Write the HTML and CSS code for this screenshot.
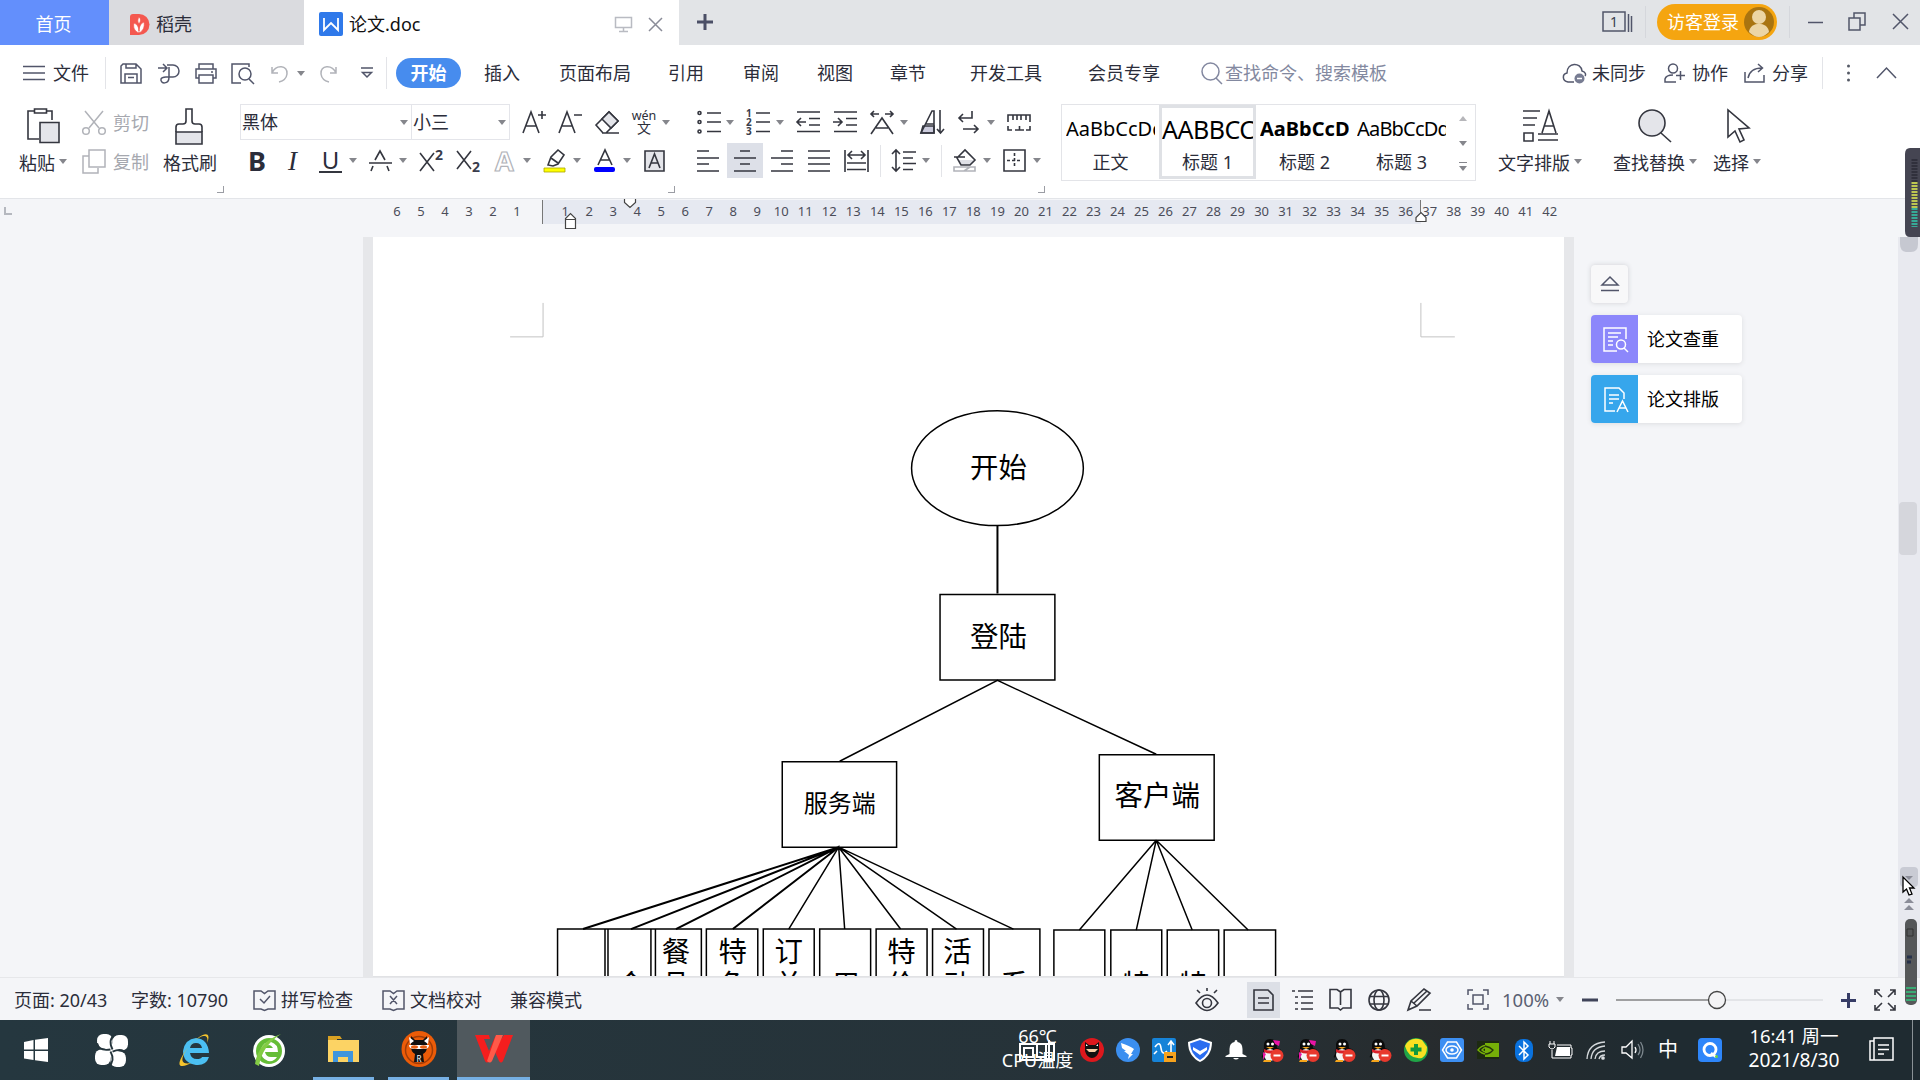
FILE: index.html
```html
<!DOCTYPE html>
<html lang="zh-CN">
<head>
<meta charset="utf-8">
<title>论文.doc</title>
<link rel="stylesheet" href="styles.css">
</head>
<body>
<header class="tabs">
  <div class="tab home">首页</div>
  <div class="tab docer">
    <svg width="19" height="21"><path d="M3 0h6a10.500 10.500 0 0 1 0 21H0V3a3 3 0 0 1 3-3z" fill="#f4584f"/><path d="M9 20V9M9 19C4 17 3 13 4 9c3 1 5 4 5 8 0-4 2-8 5-9 1 5-1 9-5 11M9 10c-2-3-1-5 0-7 2 2 2 4 0 7" fill="#fff" stroke="#f4584f" stroke-width=".7"/></svg>
    <span>稻壳</span>
  </div>
  <div class="tab current">
    <svg width="24" height="24"><rect width="24" height="24" rx="2" fill="#2f79ea"/><path d="M5 6v12l7-7 7 7V6" fill="none" stroke="#fff" stroke-width="1.800"/></svg>
    <span class="name">论文.doc</span>
    <svg width="17" height="17" class="ln pale"><path d="M.5 1.500h16v10H.5zM8.500 11.500v4M4 15.500h9"/></svg>
    <svg width="15" height="15" class="ln mid"><path d="M1 1l13 13M14 1L1 14"/></svg>
  </div>
  <svg class="plus" width="18" height="18"><path d="M9 1v16M1 9h16" stroke="#4b4f66" stroke-width="3"/></svg>
  <div class="window">
    <svg width="32" height="22" class="ln"><path d="M1 1h22v19H1zM26.500 3v18M29.500 5v16"/><text x="8" y="16" class="t14">1</text></svg>
    <i class="vr"></i>
    <div class="login"><span>访客登录</span><svg width="30" height="30"><circle cx="15" cy="15" r="15" fill="#a97410"/><circle cx="15" cy="10" r="7" fill="#ecd5a4"/><path d="M5 25c1-11 19-11 20 0q-10 10-20 0z" fill="#ecd5a4"/></svg></div>
    <i class="vr"></i>
    <svg width="15" height="18" class="ln minimize"><path d="M0 9.500h15"/></svg>
    <svg width="18" height="19" class="ln restore"><path d="M1 6h11v12H1zM6 6V1h11v12h-5"/></svg>
    <svg width="17" height="17" class="ln"><path d="M1 1l15 15M16 1L1 16"/></svg>
  </div>
</header>

<nav class="menu">
  <svg width="22" height="16" class="ln"><path d="M0 1.500h22M0 8h22M0 14.500h22"/></svg>
  <span>文件</span>
  <i class="vr"></i>
  <svg width="22" height="21" class="ln"><path d="M3 1h13l5 5v14H1V3zM6 1v4h10V1M5 20v-9h12v9M8 14.500h6"/></svg>
  <svg width="22" height="21" class="ln"><path d="M0 5h8M5 1l4 4-4 4M9 2h6a5.500 5.500 0 0 1 0 12h-4V4M11 14c0 8-9 7-8 2 1-3 5-2 8-2"/></svg>
  <svg width="22" height="21" class="ln"><path d="M4 6V1h14v5M4 15H1V6h20v9h-3M4 12h14v8H4zM16 9h2"/></svg>
  <svg width="24" height="21" class="ln"><path d="M10 20H1V1h17v3M18 16l5 5"/><circle cx="14" cy="11" r="6"/></svg>
  <svg width="18" height="19" class="ln faint"><path d="M1 3v6h6M1 9c4-9 16-8 15 1-.500 4-4 7-8 8"/></svg>
  <i class="caret"></i>
  <svg width="17" height="19" class="ln faint"><path d="M16 3v6h-6M16 9C12 0 0 1 1 10c.500 4 4 7 8 8"/></svg>
  <svg width="12" height="12" class="ln"><path d="M0 1h12M1.500 5.500L6 10l4.500-4.500z"/></svg>
  <i class="vr"></i>
  <b class="pill">开始</b>
  <span>插入</span><span>页面布局</span><span>引用</span><span>审阅</span><span>视图</span><span>章节</span><span>开发工具</span><span>会员专享</span>
  <svg width="22" height="22" class="ln search"><circle cx="9.500" cy="9.500" r="8.500"/><path d="M15 16l6 6"/></svg>
  <span class="hint">查找命令、搜索模板</span>
  <svg width="25" height="21" class="ln"><path d="M12 19H6C0 18 0 11 5 10 5-1 19-1 20 8c4 1 4 4 3 5"/><circle cx="17.500" cy="15.500" r="5" fill="#777c92" stroke="none"/><path d="M15 15.500h5" stroke="#fff"/></svg>
  <span>未同步</span>
  <svg width="21" height="20" class="ln"><circle cx="9" cy="5.500" r="4.500"/><path d="M12 19H1v-3q1-4 8-4M16.500 8v9M12 12.500h9"/></svg>
  <span>协作</span>
  <svg width="22" height="20" class="ln"><path d="M1 9v10h19v-7M4 15Q6 5 18 5M14 1l4.500 4L14 9"/></svg>
  <span>分享</span>
  <i class="vr"></i>
  <svg width="5" height="18" fill="#555a66"><circle cx="2.500" cy="2" r="1.500"/><circle cx="2.500" cy="9" r="1.500"/><circle cx="2.500" cy="16" r="1.500"/></svg>
  <svg width="21" height="12" class="ln"><path d="M1 11L10.500 1 20 11"/></svg>
</nav>

<section class="ribbon">
  <div class="clip">
    <div class="big paste"><svg width="33" height="36" class="ln dk"><path d="M12 31H1V3h24v9"/><path d="M7.500 1h12v4h-12z" fill="#fff"/><path d="M13 14.500h19v20H13z" fill="#e4e5ea"/></svg><span>粘贴<i class="caret"></i></span></div>
    <div class="pair">
      <div><svg width="24" height="24" class="ln faint"><path d="M3 0l14 17M21 0L7 17"/><circle cx="4" cy="20" r="3.300"/><circle cx="20" cy="20" r="3.300"/></svg><span>剪切</span></div>
      <div><svg width="24" height="25" class="ln faint"><path d="M7 7H1v17h15v-5M7 1h16v17H7z"/></svg><span>复制</span></div>
    </div>
    <div class="big"><svg width="28" height="37" class="ln dk"><path d="M1 24h26v12H1z" fill="#e4e5ea"/><path d="M1 24v-5q0-3 3-3h4q3 0 3-3V1h6v12q0 3 3 3h4q3 0 3 3v5"/></svg><span>格式刷</span></div>
    <i class="corner"></i>
  </div>

  <div class="font">
    <div class="row fa">
      <div class="combo"><span>黑体</span><i class="caret"></i></div>
      <div class="combo size"><span>小三</span><i class="caret"></i></div>
      <svg width="24" height="24" class="ln dk"><path d="M1 23L9 2l8 21M4 16h10M16 5h8M20 1v8"/></svg>
      <svg width="24" height="24" class="ln dk"><path d="M1 23L9 2l8 21M4 16h10M16 5h8"/></svg>
      <svg width="25" height="23" class="ln dk"><path d="M1 14L14 1l9 9-12 12H8zM7 22h17"/><path d="M7 8l9 9 7-7-9-9z" fill="#e4e5ea"/></svg>
      <span class="wen"><span>wén</span><span class="han">文</span></span>
      <i class="caret"></i>
    </div>
    <div class="row fb">
      <b class="g">B</b><i class="g it">I</i><u class="g un">U</u><i class="caret"></i>
      <svg width="23" height="22" class="ln dk"><path d="M0 13h23M6 10l5-9 5 9M4 16l-2 5M18 16l2 5"/></svg><i class="caret"></i>
      <svg width="25" height="22" class="ln dk"><path d="M1 3l14 18M15 3L1 21"/><text x="16" y="10" class="t14 bd">2</text></svg>
      <svg width="25" height="24" class="ln dk"><path d="M1 2l14 18M15 2L1 20"/><text x="16" y="23" class="t14 bd">2</text></svg>
      <span class="outline">A</span><i class="caret"></i>
      <svg width="24" height="24" class="ln dk"><path d="M5 16l3-8 7-7 6 5-6 9-5 2z"/><path d="M8 9l7 5" /><path d="M1 19h21v4H1z" fill="#ff0" stroke="#aaa500" stroke-width=".8"/></svg><i class="caret"></i>
      <svg width="22" height="24" class="ln dk"><path d="M4 16L11 1l7 15M6.500 11h9"/><rect y="18" width="21" height="5" rx="2" fill="#00f" stroke="none"/></svg><i class="caret"></i>
      <svg width="21" height="22" class="ln dk"><path d="M1 1h19v20H1z" fill="#e4e5ea"/><path d="M5 18l5.500-14L16 18M7 13h7"/></svg>
    </div>
    <i class="corner"></i>
  </div>

  <div class="para">
    <div class="row pa">
      <svg width="24" height="24" class="ln dk"><path d="M10 3h14M10 12h14M10 21.500h14"/><circle cx="2.500" cy="3" r="1.500"/><circle cx="2.500" cy="12" r="1.500"/><circle cx="2.500" cy="21.500" r="1.500"/></svg><i class="caret"></i>
      <svg width="24" height="26" class="ln dk"><path d="M10 4h14M10 13h14M10 22.500h14"/><text x="0" y="8" class="t10">1</text><text x="0" y="17" class="t10">2</text><text x="0" y="26" class="t10">3</text></svg><i class="caret"></i>
      <svg width="24" height="22" class="ln dk"><path d="M1 1h23M13 7.500h11M13 14h11M1 20.500h23M1 11h9M5 7l-4 4 4 4"/></svg>
      <svg width="24" height="22" class="ln dk"><path d="M1 1h23M13 7.500h11M13 14h11M1 20.500h23M0 11h9M5 7l4 4-4 4"/></svg>
      <svg width="24" height="25" class="ln dk"><path d="M1 4h8M15 4h8M4 1L1 4l3 3M20 1l3 3-3 3M1 24L12 8l11 16M6 18h12"/></svg><i class="caret"></i>
      <svg width="25" height="24" class="ln dk"><path d="M3 16h11v7H1z" fill="#ccd"/><path d="M1 23L12 1h2v22zM6 14h8M20 0v23M17 19l3.500 4 3.500-4"/></svg>
      <svg width="22" height="22" class="ln dk"><path d="M14 0v7H1M5 3L1 7l4 4M5 18h15M16 14l4 4-4 4"/></svg><i class="caret"></i>
      <svg width="24" height="17" class="ln dk"><path d="M1 8V1h22v7M6 1v5M10 1v5M14 1v5M19 1v5M1 12v4h4M23 12v4h-4M8 16h9M12.500 12v4"/></svg>
    </div>
    <div class="row pb">
      <svg width="22" height="22" class="ln dk"><path d="M0 1h12M0 8h22M0 14h12M0 21h22"/></svg>
      <span class="on"><svg width="22" height="22" class="ln dk"><path d="M6 1h10M0 8h22M6 14h10M0 21h22"/></svg></span>
      <svg width="22" height="22" class="ln dk"><path d="M10 1h12M0 8h22M10 14h12M0 21h22"/></svg>
      <svg width="22" height="22" class="ln dk"><path d="M0 1h22M0 8h22M0 14h22M0 21h22"/></svg>
      <svg width="25" height="22" class="ln dk"><path d="M1 0v22M24 0v22M4 5h17M8 1L4 5l4 4M17 1l4 4-4 4M3 13h19M3 19.500h19"/></svg>
      <i class="vr"></i>
      <svg width="24" height="23" class="ln dk"><path d="M4 1v21M0 5l4-4 4 4M0 18l4 4 4-4M11 3h13M11 9h10M11 14.500h13M11 20.500h10"/></svg><i class="caret"></i>
      <i class="vr"></i>
      <svg width="24" height="23" class="ln dk"><path d="M5 11h16l-4 5H8z" fill="#dfe0e6" stroke="none"/><path d="M1 8h11M4 9l8-8 10 10-5 5H8z"/><path d="M1 18h21v4H1zM11 22l6-4" class="faint"/></svg><i class="caret"></i>
      <svg width="23" height="23" class="ln dk"><path d="M1 1h21v21H1z"/><path d="M11.500 4v15M4 11.500h15" stroke-dasharray="3 2"/></svg><i class="caret"></i>
    </div>
    <i class="corner"></i>
  </div>

  <div class="styles">
    <div class="style"><p>AaBbCcDd</p><span>正文</span></div>
    <div class="style sel"><p class="h1">AABBCCD</p><span>标题 1</span></div>
    <div class="style"><p class="h2">AaBbCcD</p><span>标题 2</span></div>
    <div class="style"><p class="h3">AaBbCcDd</p><span>标题 3</span></div>
    <div class="steps"><i class="caret up"></i><i class="caret"></i><i class="caret more"></i></div>
  </div>

  <div class="tools">
    <div class="big"><svg width="35" height="33" class="ln dk"><path d="M0 2h17M0 9h14M0 16h12M19 24L26 2l7 22M21 17h10M1 24h9v8H1zM15 25h20M15 31h20"/></svg><span>文字排版<i class="caret"></i></span></div>
    <div class="big"><svg width="33" height="34" class="ln dk"><circle cx="14" cy="14" r="13" fill="#e4e5ea"/><path d="M23 24l10 9"/></svg><span>查找替换<i class="caret"></i></span></div>
    <div class="big"><svg width="23" height="34" class="ln dk"><path d="M1 1v27l7-6 5 11 4-2-5-11 10-1z"/></svg><span>选择<i class="caret"></i></span></div>
  </div>
</section>

<main class="workspace">
  <div class="ruler">
    <span>6</span><span>5</span><span>4</span><span>3</span><span>2</span><span>1</span><span></span><span>1</span><span>2</span><span>3</span><span>4</span><span>5</span><span>6</span><span>7</span><span>8</span><span>9</span><span>10</span><span>11</span><span>12</span><span>13</span><span>14</span><span>15</span><span>16</span><span>17</span><span>18</span><span>19</span><span>20</span><span>21</span><span>22</span><span>23</span><span>24</span><span>25</span><span>26</span><span>27</span><span>28</span><span>29</span><span>30</span><span>31</span><span>32</span><span>33</span><span>34</span><span>35</span><span>36</span><span>37</span><span>38</span><span>39</span><span>40</span><span>41</span><span>42</span>
    <svg class="marks" width="1920" height="39"><g fill="#fff" stroke="#444" stroke-width="1.200"><path d="M624.500 .5h11v4l-5.500 5-5.500-5zM565.500 30.500v-10l5-5 5 5v10zM565.500 21.500h10M1416 23.500v-4l5-5 5 5v4z"/><path d="M5 9v7h7" stroke="#b5b8bf" stroke-width="2" fill="none"/></g></svg>
  </div>
  <div class="desk">
    <svg class="page" width="1191" height="740" viewBox="373.500 236 1191 740">
      <path d="M510 336h33v-34M1456 336h-34v-34" class="crop"/>
      <g class="wire">
        <ellipse cx="998" cy="467.500" rx="86" ry="57.500"/>
        <path d="M998 525v68" stroke-width="2"/>
        <path d="M940.500 594h115v85.500h-115zM782.500 761.500H897V847H782.500zM1100 754.500h115V840h-115z"/>
        <path d="M840 761l158-81 159 74"/>
        <path d="M583 929l256-82-208 82M676 929l163-82-106 82" stroke-width="2"/>
        <path d="M789 929l50-82 6 82M901 929l-62-82 118 82M839 847l175 82M1080 930l77-90-20 90M1193 930l-36-90 92 90"/>
        <path d="M557.500 980v-51h47.500v51M608 980v-51h43v51M605 929h3M651 929h5M655.500 980v-51h46v51M706.500 980v-51h51.500v51M763.500 980v-51h51v51M820 980v-51h51v51M876.500 980v-51h51v51M933 980v-51h51v51M989.500 980v-51h51v51M1054.500 980v-50h51v50M1111.500 980v-50h51v50M1168 980v-50h51.500v50M1225 980v-50h51.500v50"/>
      </g>
      <g class="labels">
        <text x="999" y="477.500">开始</text><text x="999" y="646.500">登陆</text>
        <text x="840" y="812" class="sm">服务端</text><text x="1158" y="806">客户端</text>
        <text x="676" y="962">餐</text><text x="733" y="962">特</text><text x="789" y="962">订</text><text x="902" y="962">特</text><text x="958" y="962">活</text>
        <text x="631" y="995">会</text><text x="676" y="995">品</text><text x="733" y="995">色</text><text x="789" y="995">单</text><text x="846" y="995">用</text><text x="902" y="995">价</text><text x="958" y="995">动</text><text x="1015" y="995">系</text><text x="1137" y="995">特</text><text x="1194" y="995">特</text>
      </g>
    </svg>
    <aside class="side">
      <div class="fold"><svg width="18" height="16" class="ln"><path d="M9 1l8 8H1zM0 14.500h18"/></svg></div>
      <div class="card"><i class="violet"><svg width="25" height="25" class="ln wh"><path d="M14 24H1V1h22v11M5 6h13M5 10h10M5 14h5M5 18h5"/><circle cx="18" cy="17.500" r="4.500"/><path d="M21 21l4 4"/></svg></i><span>论文查重</span></div>
      <div class="card"><i class="sky"><svg width="24" height="25" class="ln wh"><path d="M11 24H1V1h14l5 5v6M5 8h10M5 12h10M5 16h4M13 25l5.500-11L24 25M15 21h7"/></svg></i><span>论文排版</span></div>
    </aside>
    <div class="scroll"></div>
  </div>
</main>

<footer class="status">
  <span>页面: 20/43</span><span>字数: 10790</span>
  <svg width="23" height="22" class="ln"><path d="M8 20H1V2h7l3.500 2.500L15 2h7v18h-7l-3.500 1.500zM7 10l4 4 6-7"/></svg><span>拼写检查</span>
  <svg width="23" height="22" class="ln"><path d="M8 20H1V2h7l3.500 2.500L15 2h7v18h-7l-3.500 1.500zM8 7l7 8M15 7l-7 8"/></svg><span>文档校对</span>
  <span>兼容模式</span>
  <svg width="24" height="24" class="ln dk"><path d="M1 15q11-16 22 0-11 15-22 0zM12 0v3M2 2l3 3M22 2l-3 3"/><circle cx="12" cy="15" r="4.500"/></svg>
  <i class="view"><svg width="21" height="22" class="ln dk"><path d="M1 1h14l5 5v15H1zM5 9h11M5 14h11"/></svg></i>
  <svg width="22" height="22" class="ln dk"><path d="M0 2h3M6 2h15M3 8h3M9 8h12M3 14h3M9 14h12M3 20h3M9 20h12"/></svg>
  <svg width="23" height="23" class="ln dk"><path d="M11.500 4L8 1.500H1V20h8l2.500 2 2.500-2h8V1.500h-7zV17"/></svg>
  <svg width="22" height="22" class="ln dk"><circle cx="11" cy="11" r="10"/><ellipse cx="11" cy="11" rx="5" ry="10"/><path d="M1.500 7.500h19M1.500 15h19"/></svg>
  <svg width="24" height="24" class="ln dk"><path d="M1 22l3-9L17 1l6 4L10 18zM4 13l6 5M12 22h12M7 15L20 3"/></svg>
  <svg width="22" height="21" class="ln"><path d="M1 6V1h5M16 1h5v5M21 15v5h-5M6 20H1v-5M6 6h10v9H6z"/></svg>
  <span class="pct">100%</span><i class="caret"></i>
  <svg width="16" height="18"><path d="M0 9h16" stroke="#3f4359" stroke-width="3"/></svg>
  <svg width="208" height="20"><path d="M0 10h92" stroke="#4a4a4a"/><path d="M110 10h97" stroke="#d2d4d8"/><circle cx="101" cy="10" r="8.500" fill="#f3f3f5" stroke="#444" stroke-width="1.300"/></svg>
  <svg width="15" height="18"><path d="M7.500 2v15M0 9.500h15" stroke="#363c66" stroke-width="3"/></svg>
  <svg width="22" height="22" class="ln dk"><path d="M1 6V1h5M1 1l7 7M16 1h5v5M21 1l-7 7M21 16v5h-5M21 21l-7-7M6 21H1v-5M1 21l7-7"/></svg>
</footer>

<footer class="taskbar">
  <div class="apps">
    <div class="start"><svg width="24" height="24" fill="#fff"><path d="M0 4l9.500-2v9.500H0zM11 1.700L24 0v11.500H11zM0 13h9.500v9L0 20.500zM11 13h13v11l-13-1.700z"/></svg></div>
    <div class="swirl"><svg width="33" height="33" viewBox="0 0 32 32"><g fill="#fff"><rect width="15" height="14" x="2" y="0" rx="6"/><rect width="15" height="15" x="17" y="1" rx="6"/><rect width="15" height="15" x="0" y="15" rx="6"/><rect width="15" height="15" x="15" y="17" rx="6"/><circle cx="16" cy="16" r="7"/></g><path d="M15 15Q4 17 2 9M17 15Q12 5 20 0M17 17Q27 13 31 20M15 17Q20 26 13 32" fill="none" stroke="#24343b" stroke-width="1.800"/></svg></div>
    <div class="ie"><svg width="34" height="34"><path d="M32 20H13q1 6 7 6 4 0 5-2h7q-3 9-13 8Q6 30 6 18 8 6 19 5q12 1 13 15zM13 15h12q-1-5-6-5-5 0-6 5z" fill="#4bbff2"/><path d="M9 17C-6 39 9 33 14 30 0 33 5 20 16 9 27 0 32 2 30 10 36-4 23-1 9 17z" fill="#f4c32d"/></svg></div>
    <div class="green"><svg width="34" height="34"><circle cx="17" cy="18" r="14.500" fill="#65bd36" stroke="#fff" stroke-width="3"/><path d="M26 19H13q1 5 6 5h6q-3 5-9 4-8-3-7-12 3-8 10-7 7 2 7 10zm-13-4h8q-4-6-8 0z" fill="#fff"/><path d="M3 31Q6 9 29 1 10 13 7 33z" fill="#83cc45"/></svg></div>
    <div class="run"><svg width="33" height="28"><path d="M1 1h12l2 3h-5v5H1z" fill="#d9a123"/><path d="M1 5h31v22H1z" fill="#fcd364"/><path d="M6 27V16h20v11h-5v-5H11v5z" fill="#3f95dd"/></svg></div>
    <div class="run duck"><svg width="36" height="36"><ellipse cx="18" cy="18" rx="17.500" ry="18" fill="#ec5c08"/><circle cx="18" cy="19" r="13.500" fill="none" stroke="#a03c08" stroke-width="1.500"/><path d="M10 5l4 4h8l4-4v11q0 5-4 7l1 8H13l1-8q-4-2-4-7z" fill="#111"/><path d="M8 6l5 4-4 3zM28 6l-5 4 4 3z" fill="#fff"/><path d="M8 14h20q0 4-5 4h-10q-5 0-5-4z" fill="#fff"/><ellipse cx="13.500" cy="16" rx="3.500" ry="1.700" fill="#e65f13"/><ellipse cx="22.500" cy="16" rx="3.500" ry="1.700" fill="#e65f13"/><text x="15.500" y="31" font-size="8" fill="#fff">R</text></svg></div>
    <div class="run wide"><svg width="38" height="28"><path d="M0 0h14l1 4H9l5 12 6-14q1-2 4-2h2L14 26q-2 3-4 0z" fill="#f51e1e"/><path d="M22 10L29 0h9L28 26q-2 3-4 0l-4-9z" fill="#f51e1e"/><path d="M21 0h7L17 26q-2 3-5 0z" fill="#ff5a49"/></svg></div>
  </div>
  <div class="temp"><span>66℃</span><span>CPU温度</span><svg width="37" height="22" viewBox="0 0 37 22" fill="none" stroke="#fff" stroke-width="2"><path d="M1 5h34v16H1zM5 9h9v9H5zM18 5h9v13h-9zM30 1v18"/></svg></div>
  <div class="tray">
    <div><svg width="24" height="24"><circle cx="12" cy="12" r="12" fill="#dd181d"/><path d="M5 4l4 3h6l4-3v9q-2 7-7 7t-7-7z" fill="#111"/><path d="M6 11h12l-3 3H9z" fill="#f7cfa6"/><path d="M6 6l2 2H6zM18 6l-2 2h2z" fill="#fff"/></svg></div>
    <div><svg width="24" height="24"><circle cx="12" cy="12" r="12" fill="#3b8ff0"/><path d="M5 5q9 3 13 6l-3 5h2l-5 5 1-4-5-4h2L6 10z" fill="#fff"/></svg></div>
    <div><svg width="24" height="24"><rect width="24" height="24" rx="2" fill="#1683d8"/><path d="M3 9q5-7 6 1t6 3M19 3v11M16 7l3-4 3 4M5 13l-3 3" fill="none" stroke="#fff" stroke-width="1.600"/><rect x="12" y="14" width="12" height="10" fill="#f6a21d"/><path d="M15 19h6" stroke="#222" stroke-width="2"/></svg></div>
    <div><svg width="24" height="24"><path d="M12 0l12 4q0 14-12 20Q0 18 0 4z" fill="#fff"/><path d="M12 2l10 3.500Q21 17 12 22 3 17 2 5.500z" fill="#2a6df0"/><path d="M5 9l7 4 7-4v3l-7 5-7-5z" fill="#fff"/></svg></div>
    <div><svg width="22" height="22"><path d="M11 1q1.500 0 1.500 2 5 1 5 7v5l4 2v1H.500v-1l4-2v-5q0-6 5-7Q9.500 1 11 1zM8 19h6q-3 3-6 0z" fill="#fff"/></svg></div>
    <div><svg width="24" height="25" viewBox="0 0 24 25"><g id="qq"><path d="M3 16q-3 5 1 3 1 4 7 4t8-5l2-4q1-3-4-4 0-9-7-9T4 10z" fill="#0b0b0b"/><ellipse cx="10" cy="17" rx="6" ry="6" fill="#f4f4f4"/><path d="M4 11q6 3 13 0v3q-7 3-13 0z" class="scarf"/><circle cx="8" cy="6" r="1.500" fill="#fff"/><circle cx="12.500" cy="6" r="1.500" fill="#fff"/><path d="M6 9h8l-4 2zM4 22h7v2H3z" fill="#f5a51b"/><circle cx="17" cy="17.500" r="6.500" fill="#e8392d"/><path d="M13.500 17.500h7" stroke="#fff" stroke-width="2"/></g><path d="M13 2l7 1-1 5-4-2zM3 14l3 2-3 6z" fill="#e914a5"/></svg></div>
    <div><svg width="24" height="25"><use href="#qq"/><path d="M13 2l7 1-1 5-4-2zM3 14l3 2-3 6z" fill="#e914a5"/></svg></div>
    <div><svg width="24" height="25"><use href="#qq"/></svg></div>
    <div><svg width="24" height="25"><use href="#qq"/></svg></div>
    <div><svg width="24" height="24"><circle cx="12" cy="12" r="12" fill="#20a547"/><path d="M1 8Q6-2 18 2l5 7q0 8-5 11Q5 22 1 8z" fill="#f8e022"/><path d="M12 6v11M6.500 11.500h11" stroke="#12993d" stroke-width="4"/></svg></div>
    <div><svg width="24" height="24"><rect width="24" height="24" rx="3" fill="#3d8ff2"/><path d="M7.500 4h9l5 8-5 8h-9l-5-8z" fill="none" stroke="#fff" stroke-width="1.500"/><ellipse cx="12" cy="12" rx="6" ry="4" fill="none" stroke="#fff" stroke-width="1.500"/><circle cx="12" cy="12" r="1.800" fill="#fff"/></svg></div>
    <div><svg width="22" height="18"><rect width="22" height="18" fill="#1d2a12"/><path d="M8 2h14v14H8z" fill="#76b008"/><path d="M1 9q7-9 16 0-8 8-16 0zM5 9q4-5 8 0-4 4-8 0z" fill="none" stroke="#76b008" stroke-width="1.500"/><path d="M8 5q5 1 8 4-3 4-8 4" fill="none" stroke="#27380c" stroke-width="1.300"/></svg></div>
    <div><svg width="18" height="23"><rect width="18" height="23" rx="8" fill="#0a72de"/><path d="M4 7l9 9-4 4V3l4 4-9 9" fill="none" stroke="#fff" stroke-width="1.500"/></svg></div>
    <div><svg width="25" height="18"><path d="M9 6h13v9H7z" fill="#fff"/><path d="M4 9v8h19v-3h1V7h-1V4H9M1 3v3q3 4 6 0V3zM2 3V0M6 3V0" fill="none" stroke="#fff"/></svg></div>
    <div><svg width="20" height="20" fill="none" stroke="#d5d9dc" stroke-width="1.300"><path d="M1 19Q2 3 19 2M5 19Q6 7 19 6M9 19q1-8 10-8M13 19q1-4 6-4" /><circle cx="17" cy="18" r="1.200" fill="#fff"/></svg></div>
    <div><svg width="23" height="20" fill="none" stroke="#fff" stroke-width="1.300"><path d="M1 7h4l6-6v17l-6-5H1zM14 7q2 3 0 6"/><path d="M17 4q4 6 0 11M19.500 2q5 8 0 16" stroke="#7d888e"/></svg></div>
    <div class="ime">中</div>
  </div>
  <div class="q"><svg width="24" height="24"><rect width="24" height="24" rx="4" fill="#2e86fa"/><circle cx="12" cy="11.500" r="6" fill="none" stroke="#fff" stroke-width="2.800"/><path d="M13 15l5 4" stroke="#fff" stroke-width="2.500"/><circle cx="18.500" cy="18.500" r="1.500" fill="#6bd44a"/></svg></div>
  <div class="clock"><span>16:41 周一</span><span class="date">2021/8/30</span></div>
  <div class="note"><svg width="25" height="25" fill="none" stroke="#fff" stroke-width="1.500"><path d="M5 1h19v22H5zM5 4H1v19h4M9 8h11M9 12.500h11M9 17h6"/></svg></div>
</footer>

<svg class="float meter" width="15" height="89"><path d="M15 0H5Q0 0 0 6v77q0 6 5 6h10z" fill="#454552"/><path d="M9.500 11v23" stroke="#30303c" stroke-width="6" stroke-dasharray="2 1"/><path d="M9.500 34v26" stroke="#bcc650" stroke-width="6" stroke-dasharray="2 1"/><path d="M9.500 60v19" stroke="#36ab97" stroke-width="6" stroke-dasharray="2 1"/></svg>
<svg class="float meter2" width="12" height="86"><rect width="12" height="86" rx="5" fill="#555759"/><path d="M2 10h6v7H2z" fill="none" stroke="#333"/><path d="M2 38h5M2 43h4" stroke="#26314a" stroke-width="3"/><path d="M6 68v16" stroke="#3aaa74" stroke-width="10" stroke-dasharray="2 2"/></svg>
<svg class="float thumb" width="18" height="15"><path d="M0 0h18v7q0 8-7 8H6Q0 14 0 7z" fill="#c6c8d1"/></svg>
<svg class="float arrows" width="20" height="46"><rect width="18" height="20" x="1" rx="4" fill="#c9cbd4"/><path d="M6 9h8l-4 4zM5 36l5-5 5 5zM5 43l5-5 5 5z" fill="#8b8d98"/></svg>
<svg class="float pointer" width="14" height="20"><path d="M1 1v15l3.500-3 2.500 6 3-1-2.500-6H12z" fill="#fff" stroke="#000" stroke-width="1.300"/></svg>
</body>
</html>
```
FILE: styles.css
```css
* { box-sizing: border-box; }
body {
  margin: 0; width: 1920px; height: 1080px; overflow: hidden;
  display: flex; flex-direction: column;
  font: 18px/24px "Noto Sans", "Noto Sans CJK SC", sans-serif;
  color: #2b2d3a; background: #fff; white-space: nowrap;
}
svg { display: block; flex: none; overflow: visible; }
i { font-style: normal; }

.ln { fill: none; stroke: #51556a; stroke-width: 1.500; }
.ln text { fill: #3a3d4c; stroke: none; }
.dk { stroke: #34363f; stroke-width: 1.600; }
.mid { stroke: #8a8c98; }
.pale { stroke: #b9bbc2; }
.faint { stroke: #b1b3b9; }
.search { stroke: #8388a0; }
.wh { stroke: #fff; }
.t14 { font-size: 14px; }
.t10 { font-size: 10px; font-weight: 700; }
.bd { font-weight: 700; }
.vr { width: 1px; height: 32px; background: #e3e4e8; }
.caret { display: inline-block; width: 0; height: 0; border: 4px solid transparent; border-top: 5px solid #85868c; border-bottom: 0; }

/* title bar */
.tabs { height: 45px; display: flex; align-items: center; background: #e2e4e7; }
.tab { height: 45px; display: flex; align-items: center; padding-top: 3px; }
.home { width: 109px; padding-right: 2px; justify-content: center; background: #638ffc; color: #fff; }
.docer { width: 195px; padding-left: 21px; gap: 7px; background: #dadbdf; }
.current { width: 375px; padding-left: 15px; background: #fff; color: #111; }
.name { width: 266px; margin-left: 6px; flex: none; }
.current .mid { margin-left: 16px; }
.plus { margin-left: 17px; margin-bottom: 1px; }
.window { margin-left: auto; padding: 0 11px 2px 0; display: flex; align-items: center; }
.window .vr { margin: 0 12px; background: #d5d7dc; }
.window .vr:first-of-type { margin: 0 11px; }
.login { width: 120px; height: 36px; padding-left: 10px; display: flex; align-items: center; gap: 5px; border-radius: 18px; background: #f5a510; color: #fff; }
.login span { width: 72px; }
.minimize { margin: 0 25px 0 6px; }
.restore { margin-right: 26px; }

/* menu */
.menu {
  height: 55px; padding: 1px 0 0 23px; display: grid; align-items: center; justify-items: start;
  grid-template-columns: 30px 52px 15px 38px 37px 36px 40px 26px 23px 41px 25px 10px 88px 75px 109px 75px 74px 73px 80px 118px 113px 24px 337px 30px 72px 28px 52px 28px 50px 24px 30px 1fr;
}
.pill { width: 65px; height: 30px; line-height: 30px; text-align: center; border-radius: 15px; background: #478cee; color: #fff; }
.hint { color: #8389a0; }

/* ribbon */
.ribbon { height: 99px; display: flex; border-bottom: 1px solid #e3e5e9; position: relative; z-index: 1; background: #fff; }
.ribbon > div { position: relative; flex: none; }
.clip { width: 240px; padding: 8px 0 0 19px; display: grid; grid-template-columns: 63px 81px 60px; align-items: start; }
.big { display: flex; flex-direction: column; height: 67px; justify-content: space-between; align-items: flex-start; }
.big > svg { margin-left: 12px; }
.big > span { height: 24px; display: flex; align-items: center; }
.paste > svg { margin-left: 8px; }
.big .caret { margin: 0 0 4px 4px; }
.pair { color: #a6a8af; display: grid; gap: 14px; padding-top: 2px; }
.pair div { display: flex; align-items: center; gap: 7px; height: 25px; }
.corner { position: absolute; right: 16px; top: 86px; width: 7px; height: 7px; border: solid #9b9da4; border-width: 0 1.500px 1.500px 0; }
.font { width: 450px; padding-top: 4px; }
.row { display: grid; align-items: center; justify-items: start; }
.fa { height: 36px; grid-template-columns: 171px 111px 36px 37px 37px 30px 1fr; }
.combo { width: 171px; height: 36px; padding: 0 3px 0 1px; display: flex; align-items: center; justify-content: space-between; border: 1px solid #e4e5ea; border-right: 0; }
.size { width: 99px; border-right: 1px solid #e4e5ea; }
.wen { width: 24px; display: flex; flex-direction: column; align-items: center; font-size: 12.500px; line-height: 11px; }
.han { font-size: 14px; line-height: 14px; }
.fb { height: 41px; padding-left: 8px; grid-template-columns: 40px 31px 30px 20px 30px 20px 37px 39px 28px 20px 30px 21px 29px 21px 1fr; }
.g { font-size: 27px; line-height: 28px; }
.it { font-style: italic; font-family: "Liberation Serif", serif; }
.un { width: 23px; text-align: center; text-decoration: none; font-size: 24px; line-height: 21px; height: 24px; border-bottom: 2px solid #34363f; }
.outline { font-size: 27px; font-weight: 700; color: #fff; -webkit-text-stroke: 1.200px #b1b3b9; }
.font .corner { right: 15px; }
.para { width: 371px; padding-top: 4px; }
.pa { height: 36px; padding-left: 7px; grid-template-columns: 29px 20px 30px 20px 37px 37px 30px 20px 38px 29px 20px 1fr; }
.pb { height: 41px; padding-left: 7px; grid-template-columns: 30px 44px 37px 36px 36px 12px 30px 19px 12px 30px 20px 30px 1fr; }
.on { width: 36px; height: 35px; display: grid; place-items: center; background: #dde0e8; }
.styles { width: 415px; height: 77px; margin-top: 4px; display: flex; border: 1px solid #e3e4e8; }
.style { width: 97px; height: 74px; padding: 11px 4px 0; text-align: center; overflow: hidden; }
.style p { margin: 0 0 8px; height: 26px; line-height: 26px; overflow: hidden; text-align: left; color: #000; font-size: 20px; }
.sel { border: 3px solid #dfe1e5; padding: 8px 0 0; }
.style .h1 { font-size: 25px; letter-spacing: -.5px; }
.style .h2 { font-weight: 700; }
.style .h3 { letter-spacing: -.8px; }
.steps { flex: 1; display: flex; flex-direction: column; align-items: center; padding-top: 11px; }
.steps .caret { margin: 0 0 20px; }
.steps .up { transform: scaleY(-1); opacity: .6; }
.steps .more { position: relative; }
.more::before { content: ""; position: absolute; left: -4px; top: -9px; width: 8px; height: 1px; background: #85868c; }
.tools { display: grid; grid-template-columns: 115px 100px 60px; padding: 9px 0 0 22px; }
.tools .big { height: 66px; }
.tools .big > svg { margin-left: 25px; }
.tools .big:last-child > svg { margin-left: 14px; }

/* document area */
.workspace { height: 778px; flex: none; background: #f4f5f8; display: flex; flex-direction: column; }
.ruler {
  position: relative; height: 38px; padding-left: 385px; display: flex;
  font-size: 13px; line-height: 25px; color: #4b4d59;
  background:
    linear-gradient(#777, #777) 542px 1px / 1px 24px no-repeat,
    linear-gradient(#777, #777) 1420px 1px / 1px 16px no-repeat,
    linear-gradient(#e6e9f1, #e6e9f1) 543px 1px / 878px 24px no-repeat;
}
.ruler span { width: 24.020px; flex: none; text-align: center; }
.marks { position: absolute; left: 0; top: -1px; }
.desk { height: 740px; display: flex; padding-left: 363px; }
.page { background: #fff; border-bottom: 1px solid #e1e2e5; margin-left: 10px; clip-path: inset(0 -11px 0 -10px); box-shadow: 0 0 0 10px #e6e7ea; overflow: hidden; }
.crop { fill: none; stroke: #c3c3c3; }
.wire { fill: none; stroke: #000; stroke-width: 1.500; }
.labels { font: 28.500px "Noto Sans CJK SC", sans-serif; text-anchor: middle; fill: #000; }
.sm { font-size: 24px; }
.side { width: 335px; padding: 28px 0 0 27px; color: #000; }
.fold { width: 37px; height: 38px; display: grid; place-items: center; background: #f8f8f9; border-radius: 4px; box-shadow: 0 0 5px #cfd0d4; margin-bottom: 12px; }
.card { width: 151px; height: 48px; margin-bottom: 12px; display: flex; align-items: center; gap: 9px; background: #fff; border-radius: 4px; box-shadow: 0 1px 5px #dcdde0; overflow: hidden; }
.card i { width: 47px; height: 48px; padding-left: 2px; display: grid; place-items: center; }
.violet { background: #8c87fb; }
.sky { background: #36a6ec; }
.scroll { width: 22px; background: #e8e9ef; }
.scroll::before { content: ""; display: block; width: 18px; height: 53px; margin: 265px 0 0 1px; border-radius: 4px; background: #d5d6dc; }

/* status bar */
.status {
  height: 43px; flex: none; padding: 1px 0 0 14px; background: #f4f5f8; border-top: 1px solid #e6e7ea;
  display: grid; align-items: center; justify-items: start;
  grid-template-columns: 117px 122px 28px 101px 28px 100px 685px 52px 45px 37px 39px 39px 60px 35px 54px 26px 34px 225px 33px 1fr;
}
.view { width: 33px; height: 36px; display: grid; place-items: center; background: #dcdfe6; }
.pct { color: #5a5f72; font-size: 18.500px; }

/* task bar */
.taskbar { height: 60px; flex: none; display: flex; background: linear-gradient(90deg, #25373f, #263238 60%, #272b2d 76%, #1f2b31 86%); color: #fff; }
.apps { width: 1001px; display: flex; }
.apps div { height: 60px; flex: none; display: grid; place-items: center; }
.apps .start { width: 72px; }
.apps .swirl { width: 78px; }
.apps .ie { width: 88px; }
.apps .green { width: 62px; margin-right: 13px; }
.apps .run { width: 61px; margin-right: 14px; border-bottom: 3px solid #76b0e4; }
.apps .duck { margin-right: 8px; }
.apps .wide { width: 73px; background: #50595e; }
.temp { width: 73px; position: relative; display: flex; flex-direction: column; align-items: center; padding-top: 4px; }
.temp svg { position: absolute; left: 18px; top: 19px; }
.tray { width: 614px; display: grid; grid-template-columns: repeat(17, 36px); }
.tray div { display: grid; place-items: center; }
.scarf { fill: #d8202a; }
.ime { font-size: 20px; }
.q { width: 44px; display: grid; place-items: center; }
.clock { width: 126px; padding: 4px 2px 0 0; display: flex; flex-direction: column; align-items: center; font-size: 18.500px; }
.date { font-size: 19.200px; }
.note { width: 55px; padding: 17px 0 0 11px; border-right: 1px solid #8a9296; }

.float { position: absolute; z-index: 2; }
.meter { left: 1905px; top: 148px; }
.meter2 { left: 1905px; top: 919px; }
.thumb { left: 1900px; top: 237px; }
.arrows { left: 1899px; top: 867px; }
.pointer { left: 1902px; top: 876px; }
```
